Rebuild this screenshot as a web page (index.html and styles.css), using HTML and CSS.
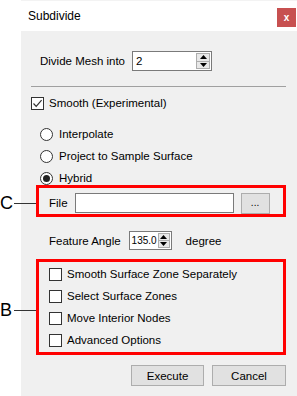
FILE: index.html
```html
<!DOCTYPE html>
<html>
<head>
<meta charset="utf-8">
<link rel="stylesheet" href="styles.css">
</head>
<body>
<div class="window">
  <div class="titlebar">
    <span class="title">Subdivide</span>
    <span class="close">x</span>
  </div>
  <div class="panel">
    <div class="divide-row">
      <span>Divide Mesh into</span>
      <div class="spin spin-mesh">
        <span class="val">2</span>
        <div class="spinbtns">
          <span class="sb"><svg width="7" height="4" viewBox="0 0 7 4"><path d="M3.5 0 L7 4 L0 4 Z" fill="#000"/></svg></span>
          <span class="sb"><svg width="7" height="4" viewBox="0 0 7 4"><path d="M0 0 L7 0 L3.5 4 Z" fill="#000"/></svg></span>
        </div>
      </div>
    </div>
    <div class="sep"></div>
    <div class="check-row smooth">
      <span class="box"><svg width="11" height="11" viewBox="0 0 11 11"><path d="M1.5 5.5 L4.2 8.3 L9.6 2.2" fill="none" stroke="#333" stroke-width="1.2"/></svg></span>
      <span>Smooth (Experimental)</span>
    </div>
    <div class="radios">
      <div class="radio-row"><span class="radio"></span><span>Interpolate</span></div>
      <div class="radio-row"><span class="radio"></span><span>Project to Sample Surface</span></div>
      <div class="radio-row"><span class="radio on"><span class="dot"></span></span><span>Hybrid</span></div>
    </div>
    <div class="redbox boxc">
      <span class="annot annot-c"><span class="letter">C</span><span class="line"></span></span>
      <span>File</span>
      <span class="input"></span>
      <span class="btn browse">...</span>
    </div>
    <div class="feature-row">
      <span>Feature Angle</span>
      <div class="spin spin-angle">
        <span class="val">135.0</span>
        <div class="spinbtns">
          <span class="sb"><svg width="7" height="4" viewBox="0 0 7 4"><path d="M3.5 0 L7 4 L0 4 Z" fill="#000"/></svg></span>
          <span class="sb"><svg width="7" height="4" viewBox="0 0 7 4"><path d="M0 0 L7 0 L3.5 4 Z" fill="#000"/></svg></span>
        </div>
      </div>
      <span class="degree">degree</span>
    </div>
    <div class="redbox boxb">
      <span class="annot annot-b"><span class="letter">B</span><span class="line"></span></span>
      <div class="opt-row"><span class="box"></span><span>Smooth Surface Zone Separately</span></div>
      <div class="opt-row"><span class="box"></span><span>Select Surface Zones</span></div>
      <div class="opt-row"><span class="box"></span><span>Move Interior Nodes</span></div>
      <div class="opt-row"><span class="box"></span><span>Advanced Options</span></div>
    </div>
    <div class="buttons">
      <span class="btn exec">Execute</span>
      <span class="btn cancel">Cancel</span>
    </div>
  </div>
</div>
</body>
</html>
```
FILE: styles.css
```css
html, body {
  margin: 0;
  padding: 0;
  background: #ffffff;
}
body {
  font-family: "Liberation Sans", Arial, sans-serif;
  font-size: 11.5px;
  color: #000;
}
.window {
  display: flex;
  flex-direction: column;
  width: 276px;
  margin-left: 21px;
}
.titlebar {
  height: 31px;
  display: flex;
  justify-content: space-between;
  align-items: flex-start;
  background: #fff;
  box-sizing: border-box;
  border-top: 1px solid #f3f3f3;
}
.title {
  font-size: 12px;
  line-height: 14px;
  margin-top: 8px;
  padding-left: 7px;
}
.close {
  width: 19px;
  height: 19px;
  margin-top: 7px;
  margin-right: 1px;
  background: #c75050;
  color: #fff;
  font-weight: bold;
  font-size: 10px;
  display: flex;
  align-items: center;
  justify-content: center;
  line-height: 1;
}
.panel {
  background: #f0f0f0;
  height: 365px;
  display: flex;
  flex-direction: column;
}
.divide-row {
  margin-top: 20px;
  padding-left: 19px;
  height: 20px;
  display: flex;
  align-items: center;
  gap: 7px;
}
.spin {
  box-sizing: border-box;
  border: 1px solid #7a7a7a;
  background: #fff;
  display: flex;
  align-items: center;
  justify-content: space-between;
  padding: 1px 1px 1px 3px;
  flex: none;
}
.spin-mesh {
  width: 80px;
  height: 20px;
}
.spin-angle {
  width: 43px;
  height: 19px;
  padding-left: 2px;
}
.spin-angle .val {
  font-size: 10px;
}
.spinbtns {
  display: flex;
  flex-direction: column;
  width: 14px;
  height: 16px;
  box-sizing: border-box;
  border: 1px solid #adadad;
  background: #e8e8e8;
  flex: none;
}
.spin-angle .spinbtns {
  height: 15px;
  width: 12px;
}
.sb {
  flex: 1;
  display: flex;
  align-items: center;
  justify-content: center;
}
.sb + .sb {
  border-top: 1px solid #adadad;
}
.sep {
  margin: 15px 11px 0 10px;
  height: 1px;
  background: #a0a0a0;
}
.check-row {
  display: flex;
  align-items: center;
  height: 16px;
  gap: 5px;
}
.smooth {
  margin-top: 8px;
  margin-left: 10px;
}
.box {
  width: 13px;
  height: 13px;
  box-sizing: border-box;
  border: 1px solid #333;
  background: #fff;
  display: flex;
  align-items: center;
  justify-content: center;
  flex: none;
}
.radios {
  margin-top: 16px;
  margin-left: 19px;
  display: flex;
  flex-direction: column;
  gap: 8px;
}
.radio-row {
  display: flex;
  align-items: center;
  height: 14px;
  gap: 6px;
}
.radio {
  width: 13px;
  height: 13px;
  box-sizing: border-box;
  border: 1px solid #333;
  border-radius: 50%;
  background: #fff;
  display: flex;
  align-items: center;
  justify-content: center;
  flex: none;
}
.dot {
  width: 7px;
  height: 7px;
  border-radius: 50%;
  background: #222;
}
.redbox {
  position: relative;
  margin: 0 11px 0 15px;
  border: 3px solid #ff0000;
  box-sizing: border-box;
}
.boxc {
  height: 32px;
  display: flex;
  align-items: center;
  padding: 4px 0 0 10px;
  gap: 7px;
}
.input {
  width: 159px;
  height: 20px;
  box-sizing: border-box;
  border: 1px solid #7a7a7a;
  background: #fff;
}
.btn {
  box-sizing: border-box;
  border: 1px solid #adadad;
  background: #e1e1e1;
  display: flex;
  align-items: center;
  justify-content: center;
}
.browse {
  width: 29px;
  height: 21px;
  font-size: 10px;
  padding-bottom: 2px;
}
.annot {
  position: absolute;
  left: -39px;
  height: 18px;
  display: flex;
  align-items: center;
}
.annot-c {
  top: 6px;
}
.annot-b {
  top: 39px;
}
.letter {
  font-size: 18px;
  line-height: 18px;
  width: 14px;
}
.line {
  width: 22px;
  height: 1px;
  background: #333;
}
.feature-row {
  margin-top: 14px;
  padding-left: 28px;
  height: 19px;
  display: flex;
  align-items: center;
  gap: 8px;
}
.degree {
  margin-left: 6px;
}
.boxb {
  margin-top: 9px;
  padding: 5px 0 5px 10px;
  display: flex;
  flex-direction: column;
  gap: 8px;
}
.opt-row {
  display: flex;
  align-items: center;
  height: 14px;
  gap: 5px;
}
.buttons {
  margin-top: 10px;
  display: flex;
  justify-content: flex-end;
  gap: 8px;
  padding-right: 11px;
}
.exec {
  width: 73px;
  height: 21px;
}
.cancel {
  width: 74px;
  height: 21px;
}
```
